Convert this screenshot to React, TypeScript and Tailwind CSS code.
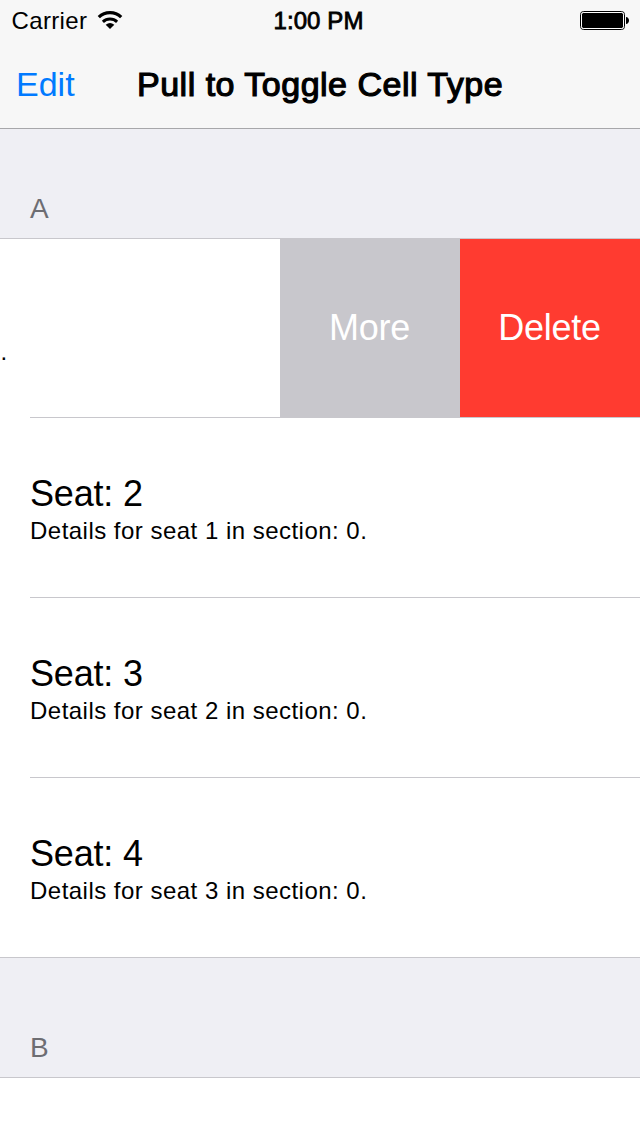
function WifiIcon() {
  return (
    <svg className="ml-[10px] mt-[10px] h-5 w-[26px]" viewBox="0 0 26 20" fill="none" stroke="#000">
      <path d="M1.8 7.2c6.2-6.1 16.2-6.1 22.4 0" strokeWidth="3.2" />
      <path d="M5.9 11.9c4-3.8 10.2-3.8 14.2 0" strokeWidth="3" />
      <path d="M13 19 8.7 14.8q4.3-3.4 8.6 0Z" fill="#000" stroke="none" />
    </svg>
  );
}

function BatteryIcon() {
  return (
    <svg className="mr-[11px] mt-[11px] h-[19px] w-[49px]" viewBox="0 0 49 19">
      <rect x="0.5" y="0.5" width="44" height="18" rx="3" fill="none" stroke="#000" />
      <rect x="1.5" y="1.5" width="42" height="16" rx="2" fill="#000" stroke="#fff" />
      <path d="M46 6c4 .2 4 6.8 0 7Z" fill="#000" />
    </svg>
  );
}

function StatusBar() {
  return (
    <div className="grid h-10 grid-cols-3 text-2xl">
      <div className="flex">
        <span className="ml-[11.5px] pt-px leading-10 tracking-[0.35px]">Carrier</span>
        <WifiIcon />
      </div>
      <span className="pt-px pr-[3px] text-center leading-10 whitespace-nowrap tracking-[0.1px] [-webkit-text-stroke:0.8px_#000]">1:00 PM</span>
      <div className="flex justify-end">
        <BatteryIcon />
      </div>
    </div>
  );
}

function NavigationBar() {
  return (
    <div className="flex h-[88px] text-[34px] leading-[88px] whitespace-nowrap">
      <button className="ml-4 w-[120px] text-left text-[#007aff]">Edit</button>
      <h1 className="pl-px tracking-[0.5px] [-webkit-text-stroke:1.2px_#000]">Pull to Toggle Cell Type</h1>
    </div>
  );
}

function SeatText({ index }: { index: number }) {
  return (
    <div className="pl-[30px] pt-[56px] whitespace-nowrap">
      <div className="h-10 text-4xl leading-10 tracking-[-0.2px]">Seat: {index + 1}</div>
      <div className="h-[34px] text-2xl leading-[34px] tracking-[0.48px]">Details for seat {index} in section: 0.</div>
    </div>
  );
}

function Separator() {
  return <div className="ml-[30px] h-px bg-[#c8c7cc]" />;
}

export default function App() {
  return (
    <main className="flex h-[1136px] w-[640px] flex-col overflow-hidden bg-white font-['Liberation_Sans',Arial,sans-serif] text-black">
      <header className="h-[129px] shrink-0 border-b border-[#a7a7aa] bg-[#f7f7f7]">
        <StatusBar />
        <NavigationBar />
      </header>

      <h2 className="h-[110px] shrink-0 border-b border-[#c8c7cc] bg-[#efeff4] pt-[60px] pl-[30px] text-[28px] leading-[40px] text-[#6d6d72]">A</h2>

      <section className="shrink-0">
        <div className="flex h-[178px]">
          <div className="w-[280px] pt-[96px] pl-[0.5px] text-2xl leading-[34px]">.</div>
          <button className="w-[180px] shrink-0 bg-[#c8c7cc] pr-px text-4xl tracking-[-0.2px] text-white">More</button>
          <button className="w-[180px] shrink-0 bg-[#ff3b30] pr-px text-4xl tracking-[-0.3px] text-white">Delete</button>
        </div>
        <Separator />
        {[1, 2, 3].map((index) => (
          <div key={index}>
            <div className="h-[179px]">
              <SeatText index={index} />
            </div>
            {index < 3 && <Separator />}
          </div>
        ))}
      </section>

      <h2 className="h-[121px] shrink-0 border-y border-[#c8c7cc] bg-[#efeff4] pt-[70px] pl-[30px] text-[28px] leading-[40px] text-[#6d6d72]">B</h2>
    </main>
  );
}
